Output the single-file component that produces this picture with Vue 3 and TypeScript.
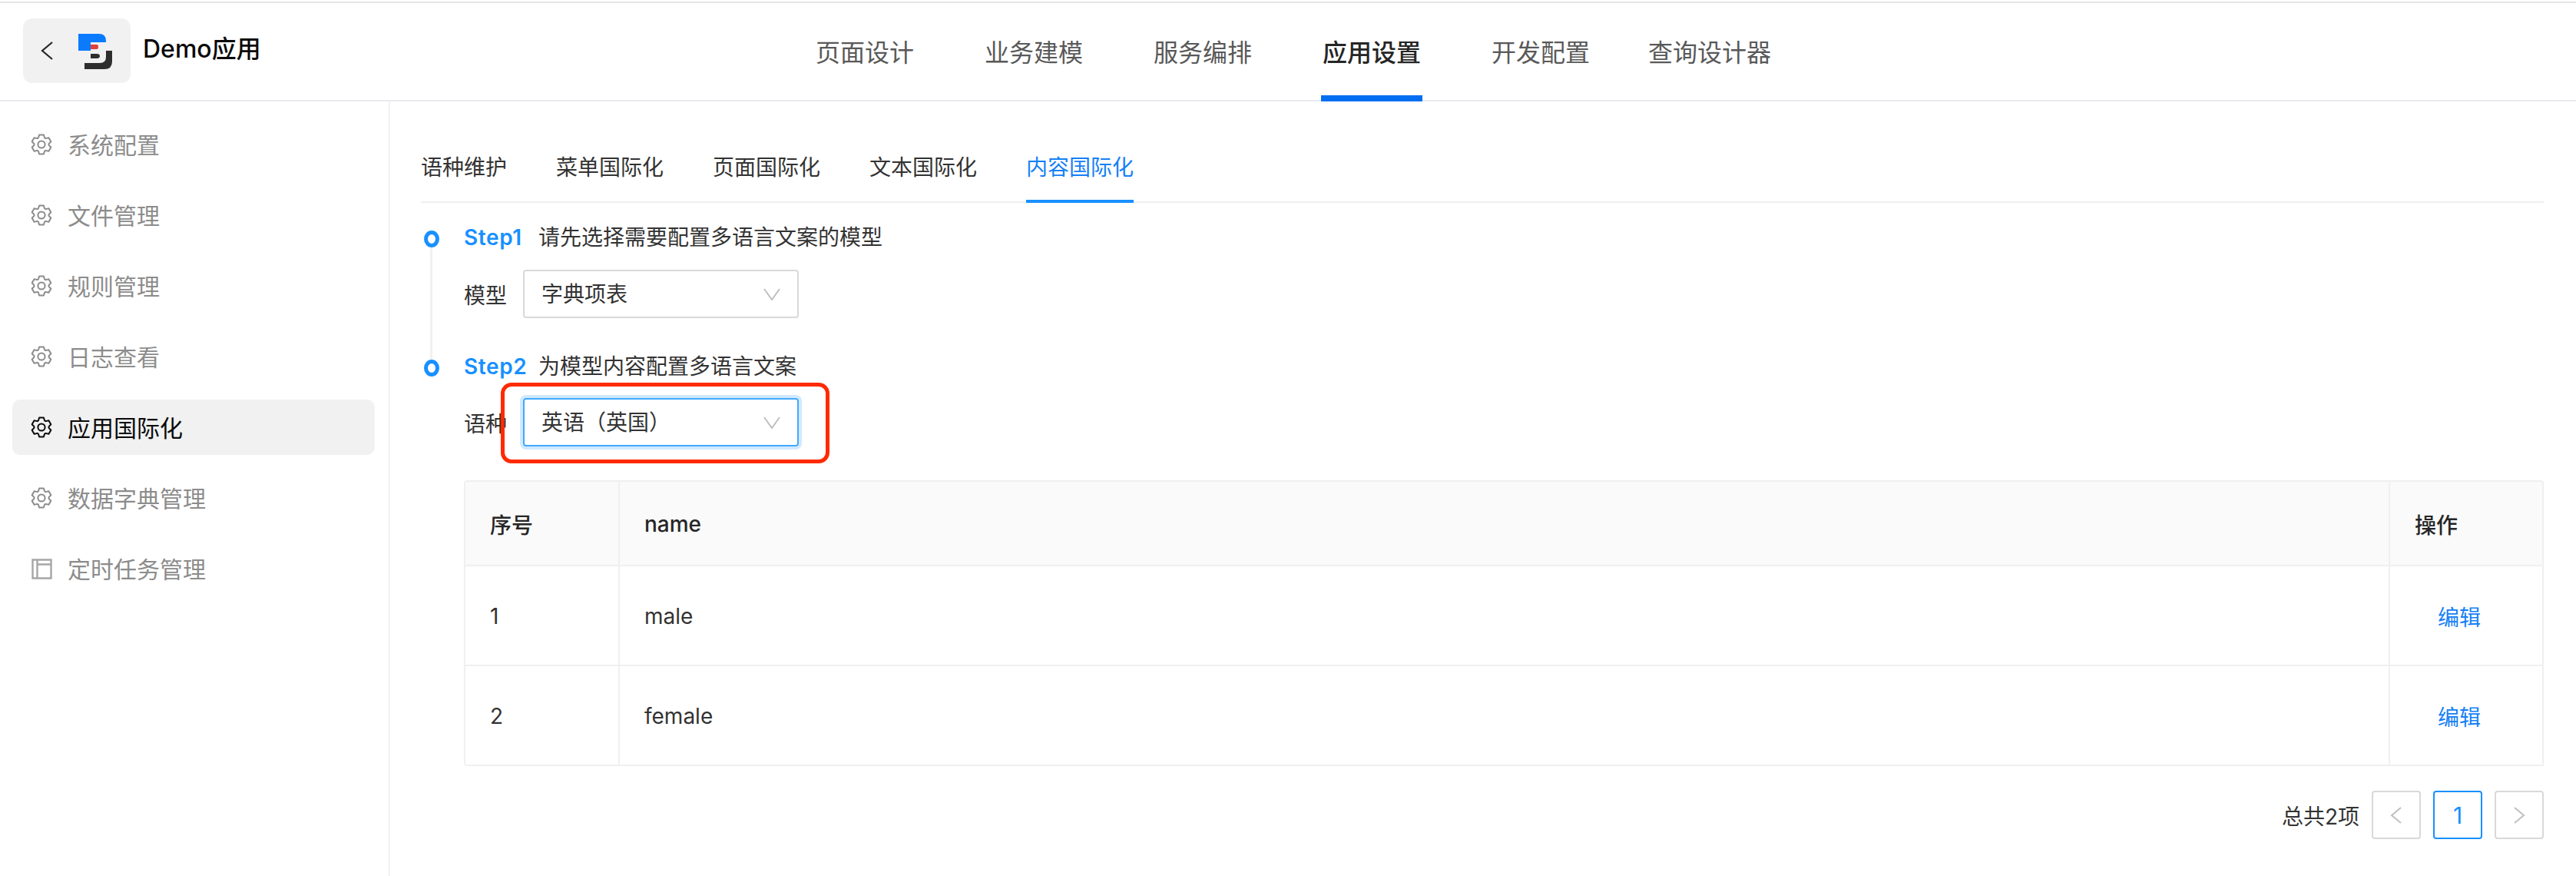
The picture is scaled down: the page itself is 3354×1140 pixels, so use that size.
<script setup lang="ts">
const navItems = ['页面设计', '业务建模', '服务编排', '应用设置', '开发配置', '查询设计器']
const menu = [
  { label: '系统配置', icon: 'gear' },
  { label: '文件管理', icon: 'gear' },
  { label: '规则管理', icon: 'gear' },
  { label: '日志查看', icon: 'gear' },
  { label: '应用国际化', icon: 'gear', active: true },
  { label: '数据字典管理', icon: 'gear' },
  { label: '定时任务管理', icon: 'layout' },
]
const tabs = ['语种维护', '菜单国际化', '页面国际化', '文本国际化', '内容国际化']
const rows = [
  { id: 1, name: 'male' },
  { id: 2, name: 'female' },
]

function gearPath(): string {
  const c = 14
  const pts: string[] = []
  for (let i = 0; i < 6; i++) {
    const a = -90 + i * 60
    const spec: [number, number][] = [
      [-25, 9.6],
      [-13, 12.9],
      [13, 12.9],
      [25, 9.6],
    ]
    for (const [d, r] of spec) {
      const t = ((a + d) * Math.PI) / 180
      pts.push(`${(c + r * Math.cos(t)).toFixed(2)} ${(c + r * Math.sin(t)).toFixed(2)}`)
    }
  }
  return 'M' + pts.join('L') + 'Z'
}
const gear = gearPath()
</script>

<template>
  <div class="page">
    <header class="header">
      <div class="brand">
        <div class="back">
          <svg class="back-arrow" width="16" height="26" viewBox="0 0 16 26">
            <path d="M15 2 L2 13 L15 24" fill="none" stroke="#262626" stroke-width="2.2" />
          </svg>
          <svg class="logo" width="44" height="46" viewBox="102 43 44 46">
            <path d="M102 43H129Q138 43 138 52V54H118V65H102Z" fill="#0a7bff" />
            <path d="M118 57H126Q128 57 128 60Q128 63 126 63H118Z" fill="#e0403a" />
            <path d="M118 69H126Q130 69 130 72Q130 75 126 75H118Z" fill="#2e2e2e" />
            <path d="M146 65V79Q146 89 136 89H110V81H130Q138 81 138 73V65Z" fill="#2e2e2e" />
          </svg>
        </div>
        <span class="title">Demo应用</span>
      </div>
      <nav class="nav">
        <a v-for="(n, i) in navItems" :key="n" class="nav-item" :class="{ active: i === 3 }">{{ n }}</a>
      </nav>
    </header>

    <div class="main">
      <aside class="side">
        <div v-for="m in menu" :key="m.label" class="menu-item" :class="{ active: m.active }">
          <svg v-if="m.icon === 'gear'" class="menu-icon" width="28" height="28" viewBox="0 0 28 28">
            <path :d="gear" fill="none" stroke="currentColor" stroke-width="2" stroke-linejoin="round" />
            <circle cx="14" cy="14" r="4.6" fill="none" stroke="currentColor" stroke-width="2" />
          </svg>
          <svg v-else class="menu-icon" width="28" height="28" viewBox="0 0 28 28">
            <path d="M2.5 2.5H26.5V26.5H2.5ZM8.5 2.5V26.5M8.5 8.5H26.5" fill="none" stroke="#a6a6a6" stroke-width="2.4" />
          </svg>
          <span class="menu-label">{{ m.label }}</span>
        </div>
      </aside>

      <section class="content">
        <div class="tabs">
          <a v-for="(t, i) in tabs" :key="t" class="tab" :class="{ active: i === 4 }">{{ t }}</a>
        </div>

        <div class="step step-one">
          <div class="rail">
            <i class="dot"></i>
            <i class="line"></i>
          </div>
          <div class="step-body">
            <div class="step-title"><b>Step1</b><span>请先选择需要配置多语言文案的模型</span></div>
            <div class="field">
              <label>模型</label>
              <div class="select">
                <span class="value">字典项表</span>
                <svg width="22" height="16" viewBox="0 0 22 16"><path d="M1 1 L11 15 L21 1" fill="none" stroke="#bfbfbf" stroke-width="2" /></svg>
              </div>
            </div>
          </div>
        </div>

        <div class="step step-two">
          <div class="rail"><i class="dot"></i></div>
          <div class="step-body">
            <div class="step-title"><b>Step2</b><span>为模型内容配置多语言文案</span></div>
            <div class="field">
              <label>语种</label>
              <div class="select focused">
                <span class="value">英语（英国）</span>
                <svg width="22" height="16" viewBox="0 0 22 16"><path d="M1 1 L11 15 L21 1" fill="none" stroke="#bfbfbf" stroke-width="2" /></svg>
                <i class="highlight"></i>
              </div>
            </div>
          </div>
        </div>

        <div class="result">
          <table class="table">
            <colgroup>
              <col class="col-idx" />
              <col />
              <col class="col-op" />
            </colgroup>
            <thead>
              <tr>
                <th>序号</th>
                <th>name</th>
                <th>操作</th>
              </tr>
            </thead>
            <tbody>
              <tr v-for="r in rows" :key="r.id">
                <td>{{ r.id }}</td>
                <td>{{ r.name }}</td>
                <td class="op"><a>编辑</a></td>
              </tr>
            </tbody>
          </table>
          <div class="pager">
            <span class="total">总共2项</span>
            <button class="pg">
              <svg width="16" height="22" viewBox="0 0 16 22"><path d="M14 1 L2 11 L14 21" fill="none" stroke="#bfbfbf" stroke-width="2" /></svg>
            </button>
            <button class="pg current">1</button>
            <button class="pg">
              <svg width="16" height="22" viewBox="0 0 16 22"><path d="M2 1 L14 11 L2 21" fill="none" stroke="#bfbfbf" stroke-width="2" /></svg>
            </button>
          </div>
        </div>
      </section>
    </div>
  </div>
</template>

<style>
html, body { margin: 0; background: #fff; }
</style>

<style scoped>
* { box-sizing: border-box; }
.page {
  width: 3354px;
  height: 1140px;
  padding-top: 2px;
  overflow: hidden;
  display: flex;
  flex-direction: column;
  background: #fff;
  font-family: Inter, "Noto Sans CJK SC", sans-serif;
  font-size: 28px;
  color: #333;
}
.header {
  height: 130px;
  flex: none;
  display: flex;
  border-top: 2px solid #e5e5e5;
  border-bottom: 2px solid #e9ebee;
}
.brand {
  width: 1062px;
  flex: none;
  padding: 20px 0 0 30px;
  display: flex;
  align-items: flex-start;
  gap: 16px;
}
.back {
  width: 140px;
  height: 84px;
  flex: none;
  border-radius: 12px;
  background: #f1f1f1;
  display: flex;
  align-items: center;
  padding-left: 23px;
}
.logo { margin-left: 33px; margin-top: 1px; }
.title {
  font-size: 32px;
  font-weight: 500;
  color: #0a0a0a;
  line-height: 80px;
}
.nav { display: flex; gap: 88px; margin-left: -2px; }
.nav-item {
  height: 128px;
  margin-bottom: -2px;
  padding: 4px 2px 0;
  display: flex;
  align-items: center;
  font-size: 32px;
  color: #595959;
  border-bottom: 8px solid transparent;
}
.nav-item:last-child { margin-left: -16px; }
.nav-item.active {
  color: #262626;
  font-weight: 500;
  border-bottom-color: #006ef0;
}
.main { flex: 1; display: flex; min-height: 0; }
.side {
  width: 508px;
  flex: none;
  border-right: 2px solid #f0f0f0;
  padding: 20px 18px 0 16px;
  display: flex;
  flex-direction: column;
  gap: 20px;
}
.menu-item {
  height: 72px;
  border-radius: 10px;
  padding-left: 24px;
  display: flex;
  align-items: center;
  gap: 20px;
  font-size: 30px;
  color: #8c8c8c;
}
.menu-label { margin-top: -3px; }
.menu-item.active {
  background: #f1f1f1;
  color: #0a0a0a;
}
.menu-icon { flex: none; }
.content {
  flex: 1;
  min-width: 0;
  padding: 0 42px 0 40px;
  display: flex;
  flex-direction: column;
}
.tabs {
  height: 132px;
  flex: none;
  display: flex;
  gap: 64px;
  border-bottom: 2px solid #f0f0f0;
}
.tab {
  height: 132px;
  padding-top: 66px;
  line-height: 40px;
  color: #333;
  border-bottom: 4px solid transparent;
}
.tab.active {
  color: #1580f5;
  border-bottom-color: #1890ff;
}
.step { display: flex; flex: none; }
.step-one { margin-top: 36px; height: 168px; }
.rail {
  width: 56px;
  flex: none;
  display: flex;
  flex-direction: column;
  align-items: flex-start;
  padding-left: 4px;
}
.dot {
  width: 20px;
  height: 22px;
  flex: none;
  border: 5px solid #1890ff;
  border-radius: 50%;
}
.line {
  flex: 1;
  width: 3px;
  margin-left: 8px;
  background: #f0f0f0;
}
.step-title {
  height: 20px;
  line-height: 18px;
  display: flex;
  white-space: nowrap;
}
.step-title b {
  width: 97px;
  flex: none;
  color: #1890ff;
  font-weight: 600;
  letter-spacing: 0.6px;
}
.field {
  margin-top: 31px;
  display: flex;
  align-items: center;
  gap: 21px;
}
.step-two .field { margin-top: 30px; }
.select {
  position: relative;
  width: 359px;
  height: 63px;
  border: 2px solid #d9d9d9;
  border-radius: 4px;
  padding: 0 22px;
  display: flex;
  align-items: center;
  justify-content: space-between;
}
.value { margin-top: -3px; }
.select.focused {
  border-color: #40a9ff;
  box-shadow: 0 0 0 4px rgba(24, 144, 255, 0.2);
}
.highlight {
  position: absolute;
  left: -31px;
  top: -22px;
  width: 428px;
  height: 105px;
  border: 5px solid #ff2a00;
  border-radius: 14px;
}
.result { margin: 44px 0 0 56px; }
.table {
  width: 100%;
  table-layout: fixed;
  border-collapse: separate;
  border-spacing: 0;
  border-top: 2px solid #f0f0f0;
  border-left: 2px solid #f0f0f0;
  border-radius: 4px;
}
.col-idx { width: 201px; }
.col-op { width: 200px; }
th, td {
  border-right: 2px solid #f0f0f0;
  border-bottom: 2px solid #f0f0f0;
  padding: 2px 32px 0;
  text-align: left;
  font-size: 28px;
  height: 130px;
  color: #333;
}
th {
  height: 110px;
  background: #fafafa;
  font-weight: 500;
  color: #262626;
}
td.op { padding-left: 62px; }
.op a { color: #1580f5; }
.pager {
  margin-top: 32px;
  display: flex;
  justify-content: flex-end;
  align-items: center;
  gap: 16px;
}
.pg {
  width: 64px;
  height: 63px;
  border: 2px solid #d9d9d9;
  border-radius: 4px;
  background: #fff;
  padding: 0;
  display: flex;
  align-items: center;
  justify-content: center;
  font: inherit;
  font-size: 30px;
  color: #1890ff;
}
.pg.current { border-color: #1890ff; }
</style>
